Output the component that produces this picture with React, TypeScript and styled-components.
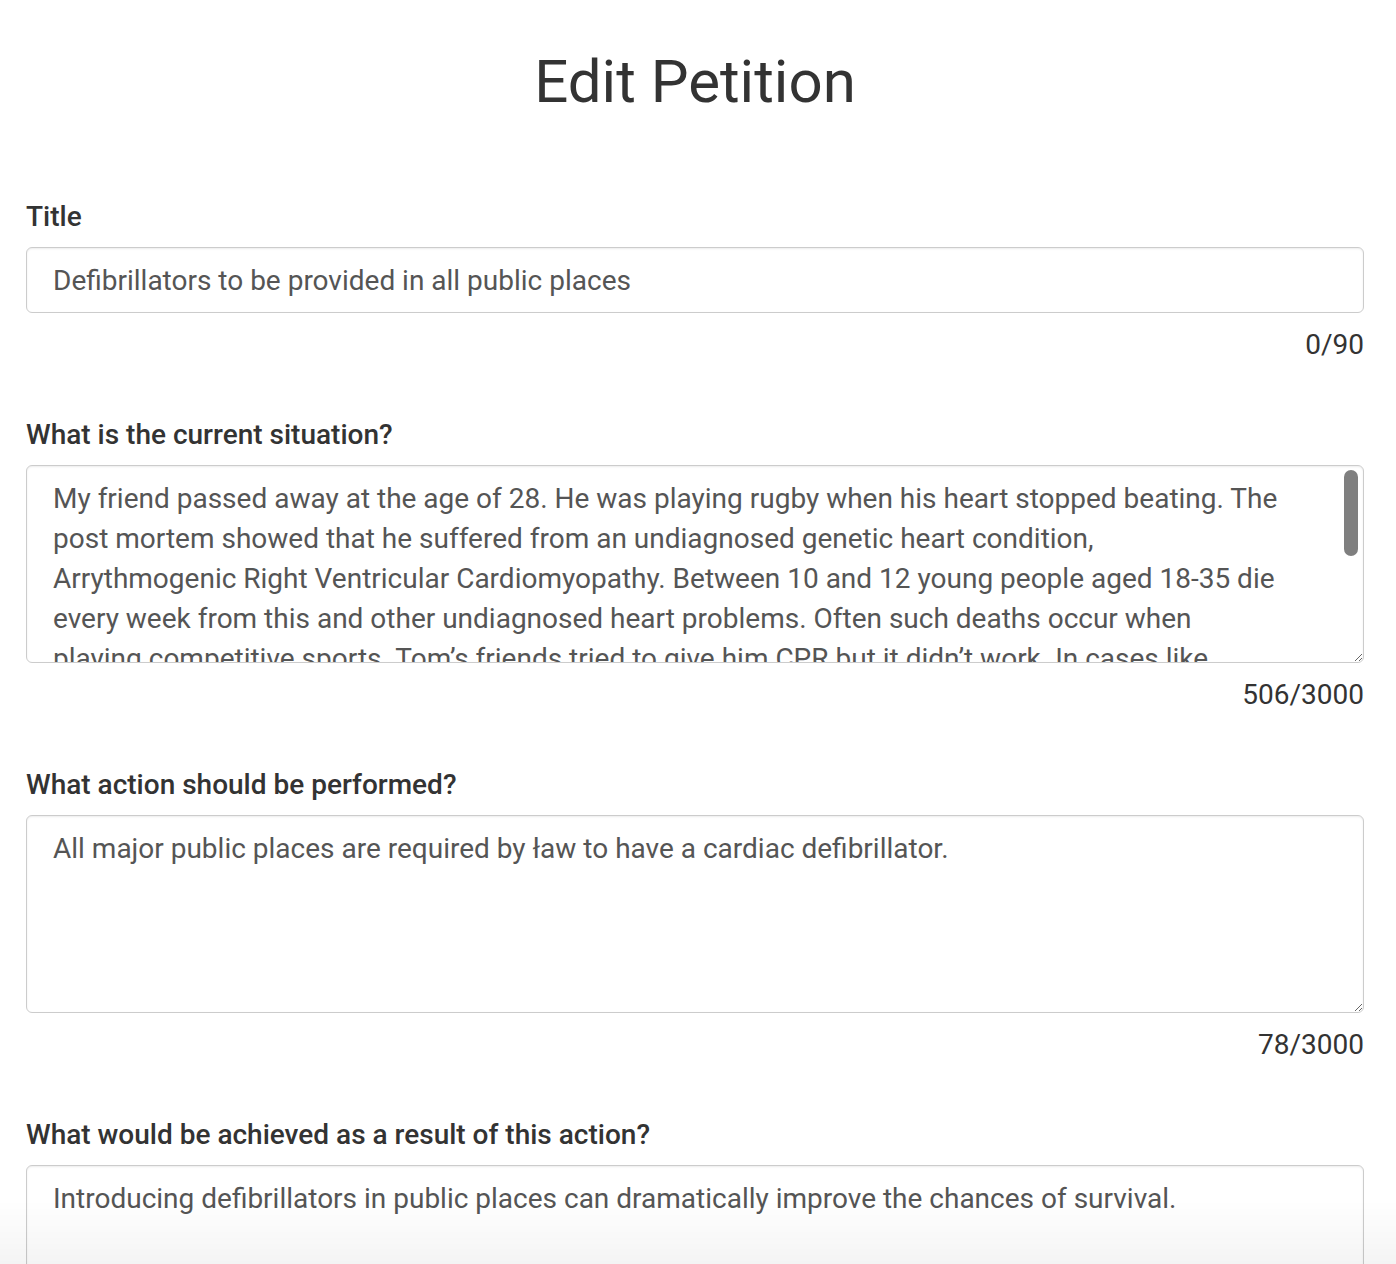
import React from "react";
import styled, { createGlobalStyle } from "styled-components";

const GlobalStyle = createGlobalStyle`
  html {
    scrollbar-width: none;
  }
  body {
    margin: 0;
    background: #ffffff;
    font-family: Roboto, "Liberation Sans", Arial, sans-serif;
    color: #333333;
  }
  * {
    box-sizing: border-box;
  }
`;

const Page = styled.main`
  padding: 0 32px 80px 26px;
`;

const Heading = styled.h1`
  margin: 49px 0 82px;
  text-align: center;
  font-size: 60px;
  line-height: 66px;
  font-weight: 400;
  color: #333333;
`;

const Form = styled.form`
  display: flex;
  flex-direction: column;
  gap: 50px;
`;

const Field = styled.div`
  display: flex;
  flex-direction: column;
`;

const Label = styled.label`
  font-size: 28px;
  line-height: 40px;
  font-weight: 500;
  color: #333333;
  margin-bottom: 10px;
`;

const controlBase = `
  width: 100%;
  border: 1px solid #cccccc;
  border-radius: 6px;
  background: #ffffff;
  box-shadow: inset 0 1px 2px rgba(0, 0, 0, 0.075);
  font-family: Roboto, "Liberation Sans", Arial, sans-serif;
  font-size: 28px;
  color: #555555;
  outline: none;
`;

const TextInput = styled.input`
  ${controlBase}
  height: 66px;
  padding: 0 26px;
  line-height: 40px;
`;

const AreaWrap = styled.div`
  position: relative;
`;

const TextArea = styled.textarea<{ $scrolling?: boolean }>`
  ${controlBase}
  display: block;
  height: 198px;
  padding: 13px ${(p) => (p.$scrolling ? "82px" : "26px")} 9px 26px;
  line-height: 40px;
  resize: vertical;
  overflow: hidden;
`;

const ScrollThumb = styled.div`
  position: absolute;
  top: 5px;
  right: 6px;
  width: 14px;
  height: 86px;
  border-radius: 7px;
  background: #7f7f7f;
  pointer-events: none;
`;

const Counter = styled.div`
  margin-top: 12px;
  text-align: right;
  font-size: 28px;
  line-height: 40px;
  color: #333333;
`;

const BottomFade = styled.div`
  position: fixed;
  left: 0;
  right: 0;
  bottom: 0;
  height: 64px;
  pointer-events: none;
  background: linear-gradient(
    to bottom,
    rgba(0, 0, 0, 0) 0%,
    rgba(0, 0, 0, 0.045) 100%
  );
`;

const situation =
  "My friend passed away at the age of 28. He was playing rugby when his heart stopped beating. The post mortem showed that he suffered from an undiagnosed genetic heart condition, Arrythmogenic Right Ventricular Cardiomyopathy. Between 10 and 12 young people aged 18-35 die every week from this and other undiagnosed heart problems. Often such deaths occur when playing competitive sports. Tom’s friends tried to give him CPR but it didn’t work. In cases like Tom’s, a defibrillator could have saved his life.\n\nEvery minute counts.\n\nWe need action now.";

type FieldDef = {
  id: string;
  label: string;
  value: string;
  count: string;
  multiline: boolean;
  scrolling?: boolean;
};

const fields: FieldDef[] = [
  {
    id: "title",
    label: "Title",
    value: "Defibrillators to be provided in all public places",
    count: "0/90",
    multiline: false,
  },
  {
    id: "situation",
    label: "What is the current situation?",
    value: situation,
    count: "506/3000",
    multiline: true,
    scrolling: true,
  },
  {
    id: "action",
    label: "What action should be performed?",
    value:
      "All major public places are required by ław to have a cardiac defibrillator.",
    count: "78/3000",
    multiline: true,
  },
  {
    id: "result",
    label: "What would be achieved as a result of this action?",
    value:
      "Introducing defibrillators in public places can dramatically improve the chances of survival.",
    count: "93/3000",
    multiline: true,
  },
];

export default function App() {
  return (
    <>
      <GlobalStyle />
      <Page>
        <Heading>Edit Petition</Heading>
        <Form onSubmit={(e) => e.preventDefault()}>
          {fields.map((f) => (
            <Field key={f.id}>
              <Label htmlFor={f.id}>{f.label}</Label>
              {f.multiline ? (
                <AreaWrap>
                  <TextArea
                    id={f.id}
                    defaultValue={f.value}
                    $scrolling={f.scrolling}
                  />
                  {f.scrolling && <ScrollThumb />}
                </AreaWrap>
              ) : (
                <TextInput id={f.id} type="text" defaultValue={f.value} />
              )}
              <Counter>{f.count}</Counter>
            </Field>
          ))}
        </Form>
      </Page>
      <BottomFade />
    </>
  );
}
